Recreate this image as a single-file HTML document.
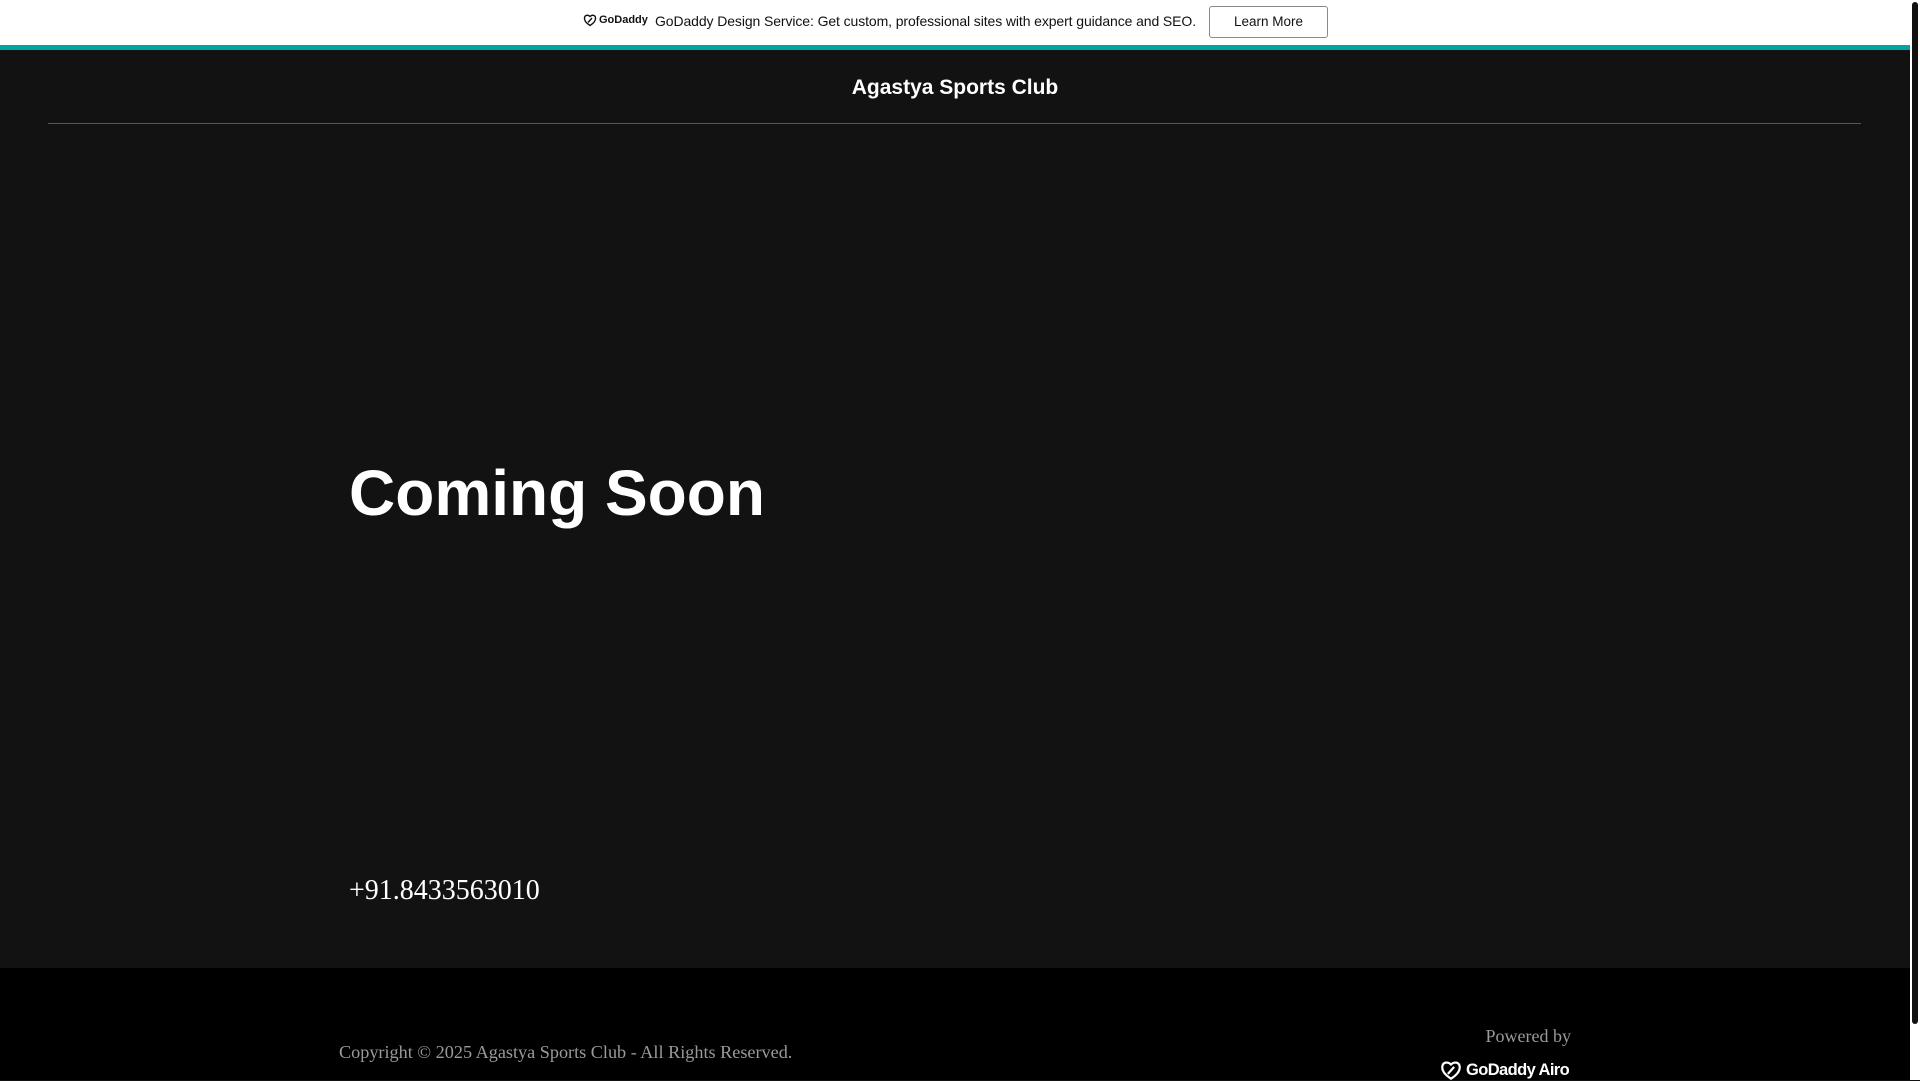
<!DOCTYPE html>
<html><head><meta charset="utf-8"><style>
*{margin:0;padding:0;box-sizing:border-box}
body{width:1920px;height:1080px;overflow:hidden;background:#121212;font-family:"Liberation Sans",sans-serif;position:relative}
.banner{position:absolute;left:0;top:0;width:1910px;height:45px;background:#fff}
.teal{position:absolute;left:0;top:45px;width:1910px;height:5px;background:#00a4a6}
.logo{position:absolute;left:583px;top:13px;font:bold 11px "Liberation Sans",sans-serif;color:#111;display:flex;align-items:center;gap:2px}
.btxt{position:absolute;left:655px;top:13px;font-size:14px;color:#111;white-space:nowrap;letter-spacing:-0.1px}
.btn{position:absolute;left:1209px;top:6px;width:119px;height:32px;border:1px solid #8a8a8a;border-radius:3px;font-size:13.5px;color:#111;text-align:center;line-height:30px}
.title{position:absolute;left:0;width:1910px;top:76px;text-align:center;color:#fff;font-weight:bold;font-size:21px}
.div{position:absolute;left:48px;width:1813px;top:123px;height:1px;background:#555}
.h1{position:absolute;left:349px;top:456px;color:#fff;font-weight:bold;font-size:64px;line-height:74px}
.phone{position:absolute;left:349px;top:875px;color:#fff;font-family:"Liberation Serif",serif;font-size:28px}
.foot{position:absolute;left:0;top:968px;width:1910px;height:112px;background:#000}
.copy{position:absolute;left:339px;top:1042px;color:#9a9a9a;font-family:"Liberation Serif",serif;font-size:18.2px}
.pw{position:absolute;right:349px;top:1026px;color:#9a9a9a;font-family:"Liberation Serif",serif;font-size:18px}
.airo{position:absolute;left:1440px;top:1059px;color:#fff;font-weight:bold;font-size:16.5px;display:flex;align-items:center;gap:4px;letter-spacing:-0.6px}
.sb{position:absolute;left:1910px;top:0;width:10px;height:1080px;background:#fff}
.sbt{position:absolute;left:1912px;top:2px;width:6px;height:1022px;background:#111;border-radius:3px}
</style></head><body>
<div class="banner"></div><div class="teal"></div>
<div class="logo"><svg width="14" height="14" viewBox="0 0 14 14"><path d="M7 12.5C3 10 1 7.5 1.5 4.5 2 2 5 1.5 7 3.5 9 1.5 12 2 12.5 4.5 13 7.5 11 10 7 12.5Z" fill="none" stroke="#111" stroke-width="1.4"/><path d="M5 9.5 9 5" stroke="#111" stroke-width="1.4"/></svg>GoDaddy</div>
<div class="btxt">GoDaddy Design Service: Get custom, professional sites with expert guidance and SEO.</div>
<div class="btn">Learn More</div>
<div class="title">Agastya Sports Club</div>
<div class="div"></div>
<div class="h1">Coming Soon</div>
<div class="phone">+91.8433563010</div>
<div class="foot"></div>
<div class="copy">Copyright © 2025 Agastya Sports Club - All Rights Reserved.</div>
<div class="pw">Powered by</div>
<div class="airo"><svg width="22" height="22" viewBox="0 0 14 14"><path d="M7 12.5C3 10 1 7.5 1.5 4.5 2 2 5 1.5 7 3.5 9 1.5 12 2 12.5 4.5 13 7.5 11 10 7 12.5Z" fill="none" stroke="#fff" stroke-width="1.4"/><path d="M5 9.5 9 5" stroke="#fff" stroke-width="1.4"/></svg>GoDaddy Airo</div>
<div class="sb"></div><div class="sbt"></div>
</body></html>
